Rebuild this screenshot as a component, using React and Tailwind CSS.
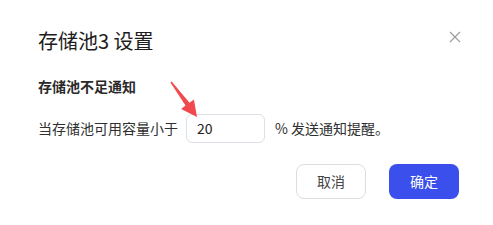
import React from 'react';

const font = { fontFamily: '"Noto Sans CJK SC", "Noto Sans", sans-serif' };

function CloseIcon() {
  return (
    <svg width="12" height="12" viewBox="0 0 12 12" className="text-[#9a9a9a]">
      <path d="M1 1 L11 11 M11 1 L1 11" stroke="currentColor" strokeWidth="1.1" fill="none" />
    </svg>
  );
}

// red annotation arrow pointing at the input
function Arrow() {
  return (
    <svg width="40" height="45" viewBox="0 0 40 45" className="absolute left-[168px] top-[78px] pointer-events-none">
      <polygon
        points="2.4,4.5 3.7,3.5 21.5,24.7 25.9,21.4 29,39 13.1,30.9 17.5,27.6"
        fill="#f04a4e"
      />
    </svg>
  );
}

export default function App() {
  return (
    <div className="w-[493px] h-[225px] bg-white overflow-hidden relative" style={font}>
      <div className="px-[38px] pt-[26px]">
        <div className="flex items-start justify-between">
          <h2 className="text-[20px] leading-[30px] text-[#1d1d1d] font-normal">存储池3 设置</h2>
          <div className="mt-[5px] mr-[-6px]">
            <CloseIcon />
          </div>
        </div>

        <div className="mt-[20px] text-[14px] leading-[20px] font-bold text-[#2a2a2a]">存储池不足通知</div>

        <div className="mt-[18px] flex items-center text-[14px] text-[#2f2f2f] h-[29px]">
          <span>当存储池可用容量小于</span>
          <div className="ml-[8px] w-[79px] h-[29px] border border-[#dcdfe6] rounded-[6px] flex items-center pl-[10px] text-[14px] text-[#222]">
            20
          </div>
          <span className="ml-[10px]">% 发送通知提醒。</span>
        </div>

        <div className="mt-[21px] flex justify-end gap-[23px] mr-[-4px]">
          <button className="w-[70px] h-[35px] rounded-[8px] border border-[#dedede] bg-white text-[14px] text-[#444]">
            取消
          </button>
          <button className="w-[70px] h-[35px] rounded-[8px] bg-[#3a4fec] text-[14px] text-white">
            确定
          </button>
        </div>
      </div>
      <Arrow />
    </div>
  );
}
